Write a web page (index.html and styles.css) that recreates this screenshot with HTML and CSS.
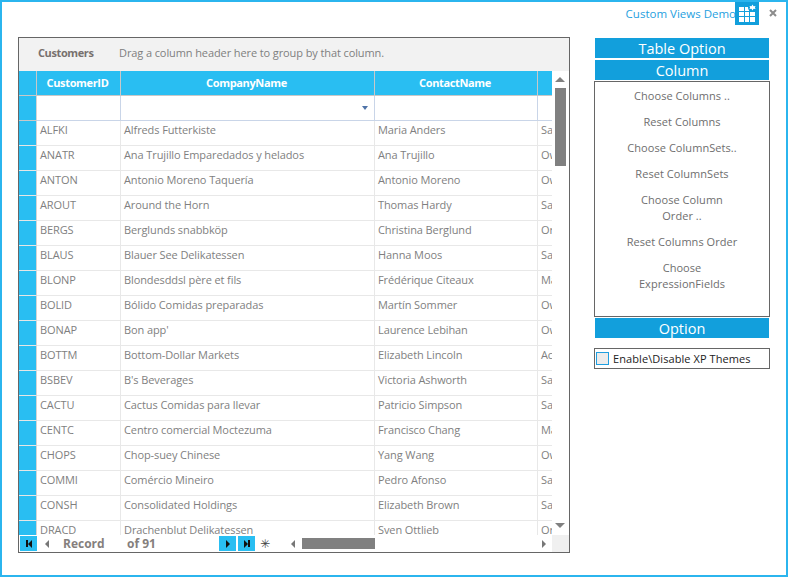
FILE: index.html
```html
<!DOCTYPE html>
<html lang="en">
<head>
  <meta charset="UTF-8">
  <title>Custom Views Demo</title>
  <link rel="stylesheet" href="styles.css">
</head>
<body>
  <div class="window">
    <div class="titlebar">
      <span class="title">Custom Views Demo</span>
      <span class="title-icon">
        <svg width="24" height="23" viewBox="0 0 24 23">
          <path d="M4 5h5v4H4zM10 5h4v4h-4zM15 5h5v4h-5zM4 10h5v4H4zM10 10h4v4h-4zM15 10h5v4h-5zM4 15h5v5H4zM10 15h4v5h-4zM15 15h5v5h-5z" fill="#fff"/>
          <circle cx="17.5" cy="5.5" r="4.5" fill="#129fdc"/>
          <path d="M17.5 2.5l1 1.7 2-.2-.6 1.5.6 1.5-2-.2-1 1.7-1-1.7-2 .2.6-1.5-.6-1.5 2 .2z" fill="#fff"/>
        </svg>
      </span>
      <svg class="close" width="8" height="8" viewBox="0 0 8 8">
        <path d="M1 1l6 6M7 1L1 7" stroke="#8c8c8c" stroke-width="2"/>
      </svg>
    </div>

    <div class="content">
      <div class="grid">
        <div class="group-bar">
          <b>Customers</b>
          <span>Drag a column header here to group by that column.</span>
        </div>

        <div class="grid-middle">
          <div class="grid-rows">
            <table>
              <colgroup>
                <col class="col-head"><col class="col-id"><col class="col-company"><col class="col-contact"><col class="col-title">
              </colgroup>
              <thead>
                <tr><th></th><th>CustomerID</th><th>CompanyName</th><th>ContactName</th><th></th></tr>
              </thead>
              <tbody>
                <tr class="filter"><th></th><td></td><td><i class="drop"></i></td><td></td><td></td></tr>
                <tr><th></th><td>ALFKI</td><td>Alfreds Futterkiste</td><td>Maria Anders</td><td>Sales Representative</td></tr>
                <tr><th></th><td>ANATR</td><td>Ana Trujillo Emparedados y helados</td><td>Ana Trujillo</td><td>Owner</td></tr>
                <tr><th></th><td>ANTON</td><td>Antonio Moreno Taquería</td><td>Antonio Moreno</td><td>Owner</td></tr>
                <tr><th></th><td>AROUT</td><td>Around the Horn</td><td>Thomas Hardy</td><td>Sales Representative</td></tr>
                <tr><th></th><td>BERGS</td><td>Berglunds snabbköp</td><td>Christina Berglund</td><td>Order Administrator</td></tr>
                <tr><th></th><td>BLAUS</td><td>Blauer See Delikatessen</td><td>Hanna Moos</td><td>Sales Representative</td></tr>
                <tr><th></th><td>BLONP</td><td>Blondesddsl père et fils</td><td>Frédérique Citeaux</td><td>Marketing Manager</td></tr>
                <tr><th></th><td>BOLID</td><td>Bólido Comidas preparadas</td><td>Martín Sommer</td><td>Owner</td></tr>
                <tr><th></th><td>BONAP</td><td>Bon app'</td><td>Laurence Lebihan</td><td>Owner</td></tr>
                <tr><th></th><td>BOTTM</td><td>Bottom-Dollar Markets</td><td>Elizabeth Lincoln</td><td>Accounting Manager</td></tr>
                <tr><th></th><td>BSBEV</td><td>B's Beverages</td><td>Victoria Ashworth</td><td>Sales Representative</td></tr>
                <tr><th></th><td>CACTU</td><td>Cactus Comidas para llevar</td><td>Patricio Simpson</td><td>Sales Agent</td></tr>
                <tr><th></th><td>CENTC</td><td>Centro comercial Moctezuma</td><td>Francisco Chang</td><td>Marketing Manager</td></tr>
                <tr><th></th><td>CHOPS</td><td>Chop-suey Chinese</td><td>Yang Wang</td><td>Owner</td></tr>
                <tr><th></th><td>COMMI</td><td>Comércio Mineiro</td><td>Pedro Afonso</td><td>Sales Associate</td></tr>
                <tr><th></th><td>CONSH</td><td>Consolidated Holdings</td><td>Elizabeth Brown</td><td>Sales Representative</td></tr>
                <tr><th></th><td>DRACD</td><td>Drachenblut Delikatessen</td><td>Sven Ottlieb</td><td>Order Administrator</td></tr>
              </tbody>
            </table>
          </div>
          <div class="vscroll">
            <i class="arrow-up"></i>
            <div class="vthumb"></div>
            <i class="arrow-down"></i>
          </div>
        </div>

        <div class="grid-footer">
          <div class="nav">
            <span class="nav-btn"><i class="bar"></i><i class="tri-left"></i></span>
            <i class="tri-left grey prev"></i>
            <b class="rec">Record</b>
            <b class="of">of 91</b>
            <span class="nav-btn"><i class="tri-right"></i></span>
            <span class="nav-btn"><i class="tri-right"></i><i class="bar"></i></span>
            <span class="star">✳</span>
          </div>
          <div class="hscroll">
            <i class="tri-left grey"></i>
            <div class="hthumb"></div>
            <i class="tri-right grey"></i>
          </div>
          <div class="corner"></div>
        </div>
      </div>

      <div class="side">
        <div class="side-head first">Table Option</div>
        <div class="side-head">Column</div>
        <div class="side-list">
          <a>Choose Columns ..</a>
          <a>Reset Columns</a>
          <a>Choose ColumnSets..</a>
          <a>Reset ColumnSets</a>
          <a>Choose Column<br>Order ..</a>
          <a>Reset Columns Order</a>
          <a>Choose<br>ExpressionFields</a>
        </div>
        <div class="side-head">Option</div>
        <label class="check"><i class="box"></i>Enable\Disable XP Themes</label>
      </div>
    </div>
  </div>
</body>
</html>
```

FILE: styles.css
```css
* {
  box-sizing: border-box;
}

body {
  margin: 0;
  font-family: "Open Sans", "Liberation Sans", sans-serif;
  font-size: 11px;
  color: #7f7f7f;
  background: #fff;
}

i {
  display: block;
}

.window {
  width: 788px;
  height: 577px;
  border: 2px solid #2bb5ee;
  overflow: hidden;
}

.titlebar {
  height: 23px;
  display: flex;
  justify-content: flex-end;
  align-items: flex-start;
}

.title {
  color: #1f9fe0;
  font-size: 11.5px;
  line-height: 24px;
  margin-right: -1px;
}

.title-icon {
  width: 24px;
  height: 23px;
  background: #129fdc;
  overflow: hidden;
}

.close {
  margin: 7px 9px 0 10px;
}

.content {
  display: flex;
  align-items: flex-start;
  padding: 12px 16px 0;
}

/* grid */
.grid {
  width: 552px;
  height: 516px;
  border: 1px solid #666;
  display: flex;
  flex-direction: column;
}

.group-bar {
  height: 33px;
  background: #f2f2f2;
  display: flex;
  align-items: center;
  padding: 0 0 5px 19px;
  flex: none;
  letter-spacing: -0.1px;
}

.group-bar b {
  font-weight: 700;
  width: 81px;
  color: #77706e;
  letter-spacing: -0.4px;
}

.grid-middle {
  flex: 1;
  display: flex;
  min-height: 0;
}

.grid-rows {
  width: 533px;
  overflow: hidden;
}

table {
  border-collapse: separate;
  border-spacing: 0;
  table-layout: fixed;
  width: 533px;
}

.col-head { width: 18px; }
.col-id { width: 84px; }
.col-company { width: 254px; }
.col-contact { width: 163px; }
.col-title { width: 14px; }

thead th {
  height: 25px;
  background: #29bef2;
  color: #fff;
  font-weight: 700;
  font-size: 11px;
  letter-spacing: -0.35px;
  border-right: 1px solid #c8c8c8;
  border-bottom: 1px solid #c8c8c8;
  padding: 0 2px 2px 0;
}

tbody th {
  background: #29bef2;
  border-right: 1px solid #d4d4d4;
  border-bottom: 1px solid #e6e6e6;
  padding: 0;
}

td {
  height: 25px;
  padding: 0 0 8px 3px;
  white-space: nowrap;
  overflow: hidden;
  letter-spacing: -0.1px;
  border-right: 1px solid #e8e8e8;
  border-bottom: 1px solid #e8e8e8;
}

td:last-child,
thead th:last-child {
  border-right: 0;
}

.filter td {
  border-color: #c9d5e8;
  position: relative;
}

.filter th {
  border-bottom-color: #c8c8c8;
}

.drop {
  position: absolute;
  right: 6px;
  top: 10px;
  border: 3px solid transparent;
  border-top: 4px solid #4f73a8;
  border-bottom: 0;
}

/* scrollbars */
.vscroll {
  width: 17px;
  padding: 6px 4px 0 3px;
  display: flex;
  flex-direction: column;
  align-items: center;
}

.arrow-up {
  border: 5px solid transparent;
  border-top: 0;
  border-bottom: 5px solid #808080;
}

.arrow-down {
  border: 5px solid transparent;
  border-bottom: 0;
  border-top: 5px solid #808080;
  margin-top: auto;
  margin-bottom: 7px;
}

.vthumb {
  width: 11px;
  height: 78px;
  background: #808080;
  margin-top: 6px;
}

.grid-footer {
  height: 17px;
  flex: none;
  display: flex;
  align-items: center;
  background: #fff;
}

.nav {
  width: 267px;
  display: flex;
  align-items: center;
  padding-left: 1px;
}

.nav-btn {
  width: 17px;
  height: 15px;
  background: #29bef2;
  display: flex;
  align-items: center;
  justify-content: center;
  margin-right: 2px;
}

.bar {
  width: 2px;
  height: 7px;
  background: #111;
}

.tri-left {
  border: 4px solid transparent;
  border-left: 0;
  border-right: 4px solid #111;
}

.tri-right {
  border: 4px solid transparent;
  border-right: 0;
  border-left: 4px solid #111;
}

.tri-left.grey {
  border-right-color: #777;
}

.tri-right.grey {
  border-left-color: #777;
}

.prev {
  margin-left: 6px;
}

.rec {
  margin-left: 14px;
  width: 64px;
  font-size: 12px;
  color: #857f7d;
}

.of {
  width: 92px;
  font-size: 12px;
  color: #857f7d;
}

.star {
  color: #444;
  font-size: 12px;
  margin-left: 3px;
  font-family: "DejaVu Sans", sans-serif;
}

.hscroll {
  width: 266px;
  display: flex;
  align-items: center;
  padding: 0 6px 0 5px;
}

.hthumb {
  width: 73px;
  height: 11px;
  background: #808080;
  margin: 0 auto 0 7px;
}

.corner {
  width: 17px;
  height: 17px;
  background: #f0f0f0;
}

/* side panel */
.side {
  width: 176px;
  margin: 1px 0 0 24px;
  display: flex;
  flex-direction: column;
}

.side-head {
  height: 20px;
  margin: 2px 1px 0;
  background: #129fdc;
  color: #fff;
  font-size: 14.5px;
  line-height: 21px;
  text-align: center;
}

.side-head.first {
  margin-top: 0;
}

.side-list {
  height: 236px;
  margin-top: 1px;
  border: 1px solid #666;
  padding-top: 6px;
  display: flex;
  flex-direction: column;
  align-items: center;
  gap: 10px;
  color: #6e6e6e;
  text-align: center;
  margin-bottom: -1px;
  letter-spacing: 0.05px;
}

.side-list a {
  line-height: 16px;
  display: block;
  width: 130px;
}

.check {
  height: 21px;
  margin-top: 10px;
  border: 1px solid #666;
  display: flex;
  align-items: center;
  padding-left: 1px;
  color: #222;
  letter-spacing: 0.08px;
}

.box {
  width: 13px;
  height: 13px;
  border: 1px solid #1f9fe0;
  background: #ececec;
  margin-right: 4px;
}
```
